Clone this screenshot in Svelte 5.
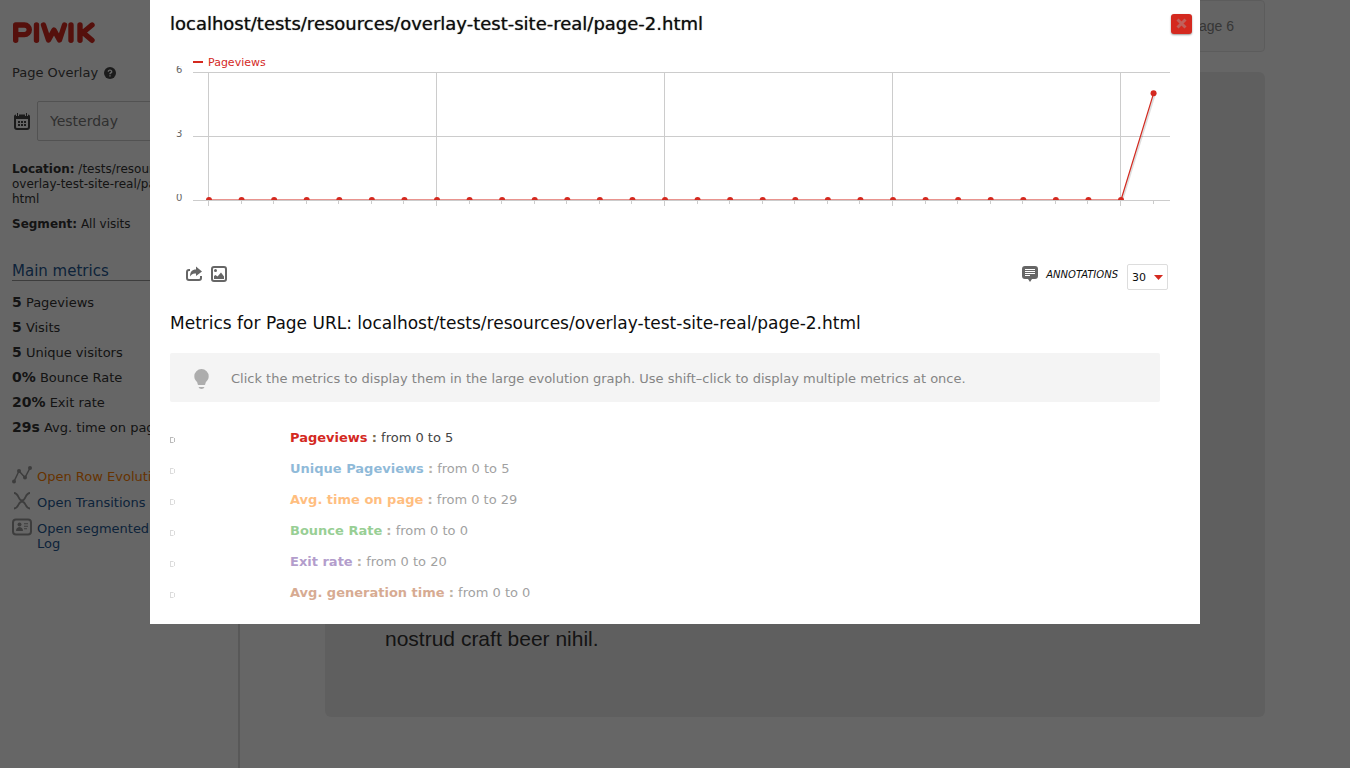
<script>
  const url = 'localhost/tests/resources/overlay-test-site-real/page-2.html';
  const mainMetrics = [
    ['5', 'Pageviews'],
    ['5', 'Visits'],
    ['5', 'Unique visitors'],
    ['0%', 'Bounce Rate'],
    ['20%', 'Exit rate'],
    ['29s', 'Avg. time on page']
  ];
  const rows = [
    { name: 'Pageviews', to: 5, color: '#d4291f', active: true },
    { name: 'Unique Pageviews', to: 5, color: '#1f78b4' },
    { name: 'Avg. time on page', to: 29, color: '#ff7f00' },
    { name: 'Bounce Rate', to: 0, color: '#33a02c' },
    { name: 'Exit rate', to: 20, color: '#6a3d9a' },
    { name: 'Avg. generation time', to: 0, color: '#b15928' }
  ];
  const values = [...Array(29).fill(0), 5];
  const px = (i) => 39 + (i * 228) / 7;
  const py = (v) => 150 - (v * 128) / 6;
  const points = values.map((v, i) => `${px(i)},${py(v)}`).join(' ');
</script>

<div class="page">
  <aside class="sidebar">
    <svg class="logo" width="84" height="24" viewBox="0 0 84 24" aria-label="Piwik" role="img">
      <g fill="none" stroke="#d4291f" stroke-width="5.400" stroke-linecap="round" stroke-linejoin="round">
        <path d="M3.700 19.300V4H12.500a4.800 4.800 0 0 1 0 9.600H4M24.500 4v15.300M31.500 4l5 15L42 9l5.500 10L52.500 4M59 4v15.300M68 4v15.300M80 4l-9 7.500L80 19.300M69 11.500h2" />
      </g>
    </svg>
    <div class="heading">Page Overlay
      <svg width="12" height="12" viewBox="0 0 12 12"><circle cx="6" cy="6" r="6" fill="#444" /><path d="M4.300 4.700a1.700 1.500 0 1 1 2.300 1.300q-.6.300-.6 1.200M6 8.300v1.300" fill="none" stroke="#fff" stroke-width="1.400" /></svg>
    </div>
    <div class="period">
      <svg width="16" height="17" viewBox="0 0 16 17">
        <path d="M2 2.500H14a1 1 0 0 1 1 1V14a2 2 0 0 1-2 2H3a2 2 0 0 1-2-2V3.500a1 1 0 0 1 1-1z" fill="none" stroke="#444" stroke-width="2" />
        <path d="M1 2h14v4H1z" fill="#444" /><path d="M3.500 0v3M12.500 0v3" stroke="#fff" stroke-width="3" /><path d="M3.500 0v3M12.500 0v3" stroke="#444" stroke-width="1" />
        <path d="M4 9h8M4 12h8" stroke="#444" stroke-width="2" stroke-dasharray="2 1" />
      </svg>
      <select aria-label="Period"><option>Yesterday</option></select>
    </div>
    <p class="location"><b>Location:</b> /tests/resources/<br />overlay-test-site-real/page-2.<br />html</p>
    <p class="segment"><b>Segment:</b> All visits</p>
    <h2>Main metrics</h2>
    <ul class="metrics">
      {#each mainMetrics as [value, label]}
        <li><b>{value}</b> {label}</li>
      {/each}
    </ul>
    <nav class="links">
      <a class="hot" href="#evolution">
        <svg width="20" height="18" viewBox="0 0 20 18"><path d="M2 15.500L7 5l6 6.500L18 2" fill="none" stroke="#999" stroke-width="1.500" /><g fill="#999"><circle cx="2" cy="15.500" r="2" /><circle cx="7" cy="5" r="2" /><circle cx="13" cy="11.500" r="2" /><circle cx="18" cy="2" r="2" /></g></svg>
        <span>Open Row Evolution</span>
      </a>
      <a href="#transitions">
        <svg width="20" height="18" viewBox="0 0 20 18"><path d="M2 1c5 0 4 7.500 8 7.500S13 1 18 1M2 16.500c5 0 4-7 8-7s3 7 8 7" fill="none" stroke="#999" stroke-width="1.800" /></svg>
        <span>Open Transitions</span>
      </a>
      <a href="#log">
        <svg width="20" height="18" viewBox="0 0 20 18"><rect x="1" y="1.500" width="18" height="15" rx="3" fill="none" stroke="#999" stroke-width="2" /><circle cx="7.500" cy="6.500" r="2" fill="#999" /><path d="M4 13c0-3 2-4 3.500-4S11 10 11 13zM12 5.300h4v1h-4zM12 7.800h4v1h-4zM12 10.300h3v1h-3z" fill="#999" /></svg>
        <span>Open segmented Visitor<br />Log</span>
      </a>
    </nav>
  </aside>
  <main class="site">
    <div class="tabs"><span>Page 6</span></div>
    <article><p>nostrud craft beer nihil.</p></article>
  </main>
</div>

<div class="backdrop">
  <section class="dialog" role="dialog" aria-label="Row evolution">
    <header>
      <h1>{url}</h1>
      <button class="close" aria-label="Close">
        <svg width="11" height="11" viewBox="0 0 11 11"><path d="M1.500 1.500l8 8M9.500 1.500l-8 8" stroke="#c0615c" stroke-width="3" /></svg>
      </button>
    </header>

    <svg class="chart" viewBox="0 0 1000 160">
      <path d="M23 12h10" stroke="#d4291f" stroke-width="2" />
      <text x="38" y="16" class="legend">Pageviews</text>
      {#each [[6, 16], [3, 80], [0, 144]] as [label, top]}
        <svg x="0" y={top} width="16" height="10"><text x="6" y="7" class="tick">{label}</text></svg>
      {/each}
      <g stroke="#ccc" stroke-width="1">
        <path d="M23 22.500H1000M23 86.500H1000M23 150.500H1000" />
        {#each values as _, i}
          {#if i % 7 === 0}
            <path d="M{Math.floor(px(i)) - 0.5} 22V156" />
          {:else}
            <path d="M{Math.round(px(i)) - 0.5} 150V154" />
          {/if}
        {/each}
      </g>
      <path d="M952 150L984.500 44.500" stroke="#000" stroke-opacity=".13" stroke-width="2.500" />
      <svg width="1000" height="150">
        <polyline {points} fill="none" stroke="#d4291f" stroke-width="1.200" />
        {#each values as v, i}
          <circle cx={px(i)} cy={py(v)} r="3" fill="#d4291f" />
        {/each}
      </svg>
    </svg>

    <div class="tools">
      <button aria-label="Export">
        <svg width="16" height="16" viewBox="0 0 16 16"><path d="M4 4H3a2 2 0 0 0-2 2v6a2 2 0 0 0 2 2h10a2 2 0 0 0 2-2v-2" fill="none" stroke="#666" stroke-width="2" /><path d="M10 .5l6 5-6 4.500V7.500C7 7 5 8.500 4 10.500 4 6 6 3.500 10 3.500z" fill="#666" /></svg>
      </button>
      <button aria-label="Export as image">
        <svg width="16" height="16" viewBox="0 0 16 16"><rect x="1" y="1" width="14" height="14" rx="2" fill="none" stroke="#666" stroke-width="2" /><circle cx="4.500" cy="4.500" r="1.500" fill="#666" /><path d="M3 13v-3l1.500-1 2 1.500L10 6.500l3 4V13z" fill="#666" /></svg>
      </button>
      <button class="annotations">
        <svg width="16" height="16" viewBox="0 0 16 16"><path d="M3 0h10a3 3 0 0 1 3 3v7a3 3 0 0 1-3 3h-3l-2 3-2-3H3a3 3 0 0 1-3-3V3a3 3 0 0 1 3-3z" fill="#666" /><path d="M3 3.500h10M3 5.500h10M3 7.500h10M3 9.500h5" stroke="#fff" /></svg>
        <i>ANNOTATIONS</i>
      </button>
      <button class="limit">30 <svg width="9" height="5" viewBox="0 0 9 5"><path d="M0 0h9L4.500 5z" fill="#d4291f" /></svg></button>
    </div>

    <h3>Metrics for Page URL: {url}</h3>
    <div class="hint">
      <svg width="15" height="20" viewBox="0 0 15 20"><path d="M7.500 0a7.200 7.200 0 0 1 7.200 7.300c0 3-1.200 4-2.700 5.700-.7.900-.4 3-1.500 3h-6c-1.100 0-.8-2.100-1.500-3C1.500 11.300.3 10.300.3 7.300A7.200 7.200 0 0 1 7.500 0zM4.500 18h6q-.7 2-3 2t-3-2z" fill="#adadad" /></svg>
      <span>Click the metrics to display them in the large evolution graph. Use shift–click to display multiple metrics at once.</span>
    </div>

    <table>
      <tbody>
        {#each rows as row}
          <tr class:active={row.active}>
            <td class="spark"><svg width="5" height="6" viewBox="0 0 5 6"><path d="M0 .5h3.500M0 5.500h3.500M.5 1v4M4.500 1v4" fill="none" stroke="#bbb" /></svg></td>
            <td><b style:color={row.color}>{row.name}</b> <em>:</em> from 0 to {row.to}</td>
          </tr>
        {/each}
      </tbody>
    </table>
  </section>
</div>

<style>
  :global(body) { overflow: hidden; background: #fff; }
  * { box-sizing: border-box; }
  .page { display: flex; min-height: 100vh; font: 13px/15px 'DejaVu Sans', Verdana, sans-serif; color: #333; }
  .sidebar { width: 240px; flex: none; padding: 21px 12px; border-right: 2px solid #ddd; white-space: nowrap; }
  svg { display: block; }
  .heading { display: flex; align-items: center; gap: 6px; margin-top: 20px; color: #444; }
  .period { display: flex; align-items: center; gap: 7px; margin: 21px 0; }
  .period svg { margin-left: 2px; flex: none; }
  select { flex: 1; min-width: 0; height: 40px; padding: 0 12px; appearance: none; border: 1px solid #ccc; border-radius: 2px; background: #fff; color: #777; font: 14px 'DejaVu Sans', sans-serif; }
  p { margin: 0; }
  .location, .segment { font-size: 12px; }
  .segment { margin-top: 10px; }
  h2 { margin: 31px 0 13px; border-bottom: 1px solid #999; color: #255792; font-size: 15px; line-height: 17px; font-weight: 400; }
  ul { list-style: none; margin: 0; padding: 0; }
  li { height: 25px; line-height: 16px; }
  li b { font-size: 14px; }
  .links { display: flex; flex-direction: column; gap: 8px; margin-top: 22px; }
  .links a { display: flex; gap: 5px; color: #255792; text-decoration: none; min-height: 18px; }
  .links span { padding-top: 3px; }
  .links svg { flex: none; }
  .links .hot { color: #ff7f00; }
  .site { flex: 1; padding: 0 85px; font-family: 'Liberation Sans', Arial, sans-serif; }
  .tabs { height: 52px; padding: 15px 30px; border: 1px solid #e7e7e7; border-radius: 4px; background: #fafafa; text-align: right; font-size: 14px; line-height: 20px; color: #888; }
  article { display: flex; align-items: flex-end; height: 645px; margin-top: 20px; padding: 60px; border-radius: 6px; background: #eee; color: #333; font-size: 21px; line-height: 36px; }
  .backdrop { position: fixed; inset: 0; display: flex; justify-content: center; align-items: flex-start; padding: 0 150px; background: rgba(0, 0, 0, .6); }
  .dialog { flex: 1; padding: 13px 40px 16px 20px; background: #fff; color: #0d0d0d; font: 13px/15px 'DejaVu Sans', Verdana, sans-serif; }
  header { display: flex; justify-content: space-between; align-items: center; height: 21px; margin-right: -32px; }
  h1 { margin: 0; font-size: 18px; font-weight: 400; line-height: 21px; text-shadow: 0 0 1px #555; }
  button { border: 0; background: none; padding: 0; font: inherit; color: inherit; }
  .close { display: flex; align-items: center; justify-content: center; width: 21px; height: 20px; border-radius: 3px; background: #d4291f; box-shadow: 0 1px 2px rgba(0, 0, 0, .4); }
  .chart { width: calc(100% + 10px); margin-top: 16px; }
  .legend { font: 11px 'DejaVu Sans', sans-serif; fill: #d4291f; }
  .tick { font: 10px 'DejaVu Sans', sans-serif; fill: #666; }
  .tools { display: flex; align-items: center; gap: 9px; height: 26px; margin: 54px -8px 0 16px; }
  .tools > button:not(.limit) { margin-bottom: 6px; }
  .annotations { display: flex; align-items: center; gap: 8px; margin-left: auto; font-size: 10px; }
  .limit { display: flex; align-items: center; justify-content: space-between; width: 41px; height: 26px; padding: 0 4px; border: 1px solid #ddd; border-radius: 2px; font-size: 11px; }
  h3 { margin: 23px 0 20px; font-size: 17px; line-height: 20px; font-weight: 400; }
  .hint { display: flex; align-items: center; gap: 22px; height: 49px; padding: 2px 24px 0; border-radius: 2px; background: #f4f4f4; color: #858585; }
  table { width: 100%; margin-top: 20px; border-collapse: collapse; }
  tr { height: 31px; opacity: .5; color: #444; }
  tr.active { opacity: 1; }
  td { padding: 0; }
  .spark { width: 120px; padding-top: 4px; }
  em { font-style: normal; font-weight: 700; color: #7c6a50; }
</style>
